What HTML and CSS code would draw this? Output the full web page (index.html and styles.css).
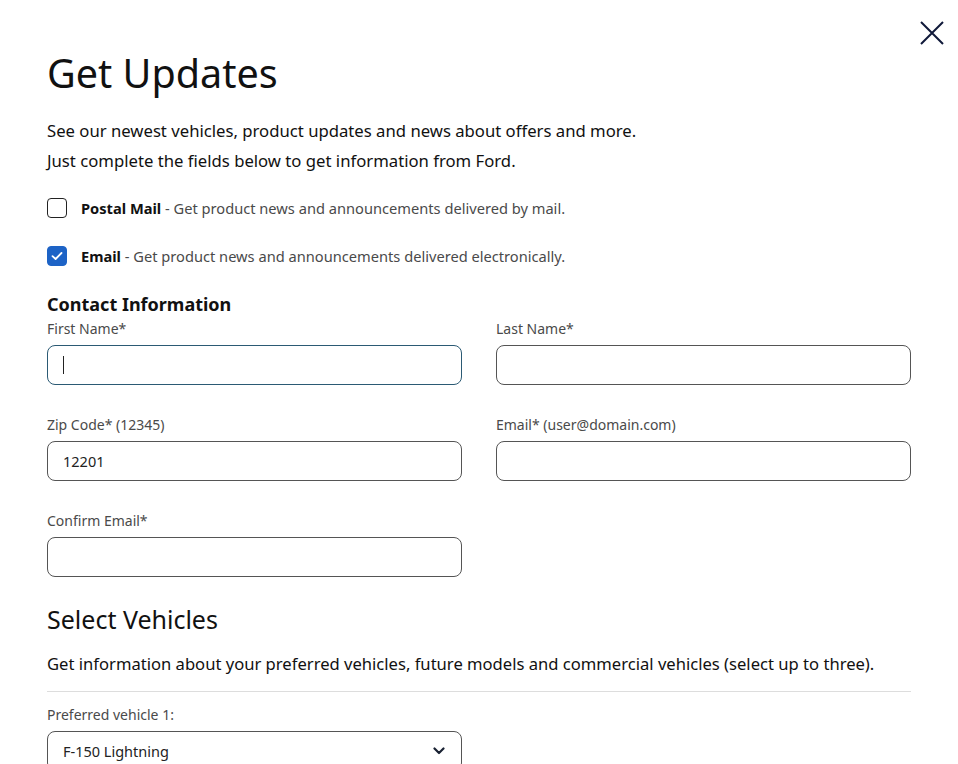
FILE: index.html
```html
<!DOCTYPE html>
<html lang="en">
<head>
<meta charset="utf-8">
<title>Get Updates</title>
<link rel="stylesheet" href="styles.css">
</head>
<body>
<div class="dialog">
  <button class="close" aria-label="Close">
    <svg width="24" height="24" viewBox="0 0 24 24"><path d="M1 1 L23 23 M23 1 L1 23" stroke="#10193a" stroke-width="2" fill="none"/></svg>
  </button>
  <h1 class="title">Get Updates</h1>
  <p class="intro">See our newest vehicles, product updates and news about offers and more.<br>Just complete the fields below to get information from Ford.</p>

  <label class="check">
    <span class="box"></span>
    <span class="check-text"><b>Postal Mail</b> - Get product news and announcements delivered by mail.</span>
  </label>
  <label class="check">
    <span class="box checked">
      <svg width="14" height="14" viewBox="0 0 14 14"><path d="M2.5 7.2 L5.6 10 L11.5 4" stroke="#fff" stroke-width="1.8" fill="none" stroke-linecap="round" stroke-linejoin="round"/></svg>
    </span>
    <span class="check-text"><b>Email</b> - Get product news and announcements delivered electronically.</span>
  </label>

  <h2 class="section">Contact Information</h2>
  <div class="grid">
    <div class="field">
      <div class="label">First Name*</div>
      <div class="input focused"><span class="caret"></span></div>
    </div>
    <div class="field">
      <div class="label">Last Name*</div>
      <div class="input"></div>
    </div>
    <div class="field">
      <div class="label">Zip Code* (12345)</div>
      <div class="input">12201</div>
    </div>
    <div class="field">
      <div class="label">Email* (user@domain.com)</div>
      <div class="input"></div>
    </div>
    <div class="field">
      <div class="label">Confirm Email*</div>
      <div class="input"></div>
    </div>
  </div>

  <h2 class="vehicles">Select Vehicles</h2>
  <p class="vehicles-text">Get information about your preferred vehicles, future models and commercial vehicles (select up to three).</p>
  <hr class="divider">
  <div class="field half">
    <div class="label">Preferred vehicle 1:</div>
    <div class="input select">
      <span>F-150 Lightning</span>
      <svg width="12" height="8" viewBox="0 0 12 8"><path d="M1.5 1.5 L6 6 L10.5 1.5" stroke="#1a2233" stroke-width="2.2" fill="none" stroke-linecap="round" stroke-linejoin="round"/></svg>
    </div>
  </div>
</div>
</body>
</html>
```

FILE: styles.css
```css
* { box-sizing: border-box; }
html, body { margin: 0; padding: 0; background: #fff; }
body {
  font-family: "Noto Sans", "Open Sans", sans-serif;
  color: #111;
  overflow: hidden;
  height: 764px;
}
.dialog {
  position: relative;
  padding: 46px 47px 0 47px;
  width: 958px;
}
.close {
  position: absolute;
  top: 21px;
  right: 14px;
  background: none;
  border: 0;
  padding: 0;
  width: 24px;
  height: 24px;
  cursor: pointer;
}
.title {
  margin: 0;
  font-size: 39.5px;
  font-weight: 400;
  line-height: 54px;
  color: #111;
}
.intro {
  margin: 16px 0 0;
  font-size: 16.7px;
  line-height: 30px;
  color: #111;
}
.check {
  display: flex;
  align-items: center;
  gap: 14px;
  height: 20px;
  margin-top: 22px;
}
.check + .check { margin-top: 28px; }
.box {
  width: 20px;
  height: 20px;
  border: 1.5px solid #222;
  border-radius: 4px;
  flex: none;
  display: flex;
  align-items: center;
  justify-content: center;
}
.box.checked {
  background: #1d63c6;
  border-color: #1d63c6;
}
.check-text {
  font-size: 14.65px;
  color: #4a4a4a;
}
.check-text b { color: #111; font-weight: 700; }
.section {
  margin: 26px 0 0;
  font-size: 18px;
  font-weight: 700;
  line-height: 24px;
  color: #111;
}
.grid {
  display: grid;
  grid-template-columns: 415px 415px;
  column-gap: 34px;
  row-gap: 28px;
  width: 864px;
  margin-top: 1px;
}
.field { display: flex; flex-direction: column; }
.field.half { width: 415px; }
.label {
  font-size: 14px;
  line-height: 24px;
  color: #4a4a4a;
  margin-bottom: 4px;
}
.input {
  height: 40px;
  border: 1px solid #555;
  border-radius: 8px;
  padding: 0 15px;
  display: flex;
  align-items: center;
  font-size: 14.5px;
  color: #222;
}
.input.focused { border-color: #2b5a74; }
.caret {
  width: 1px;
  height: 18px;
  background: #222;
}
.vehicles {
  margin: 25px 0 0;
  font-size: 25px;
  font-weight: 400;
  line-height: 34px;
  color: #111;
}
.vehicles-text {
  margin: 16px 0 0;
  font-size: 16.6px;
  line-height: 24px;
}
.divider {
  margin: 15px 0 0;
  border: 0;
  border-top: 1px solid #ddd;
  width: 864px;
}
.half { margin-top: 11px; }
.select { justify-content: space-between; padding-right: 16px; }
```
